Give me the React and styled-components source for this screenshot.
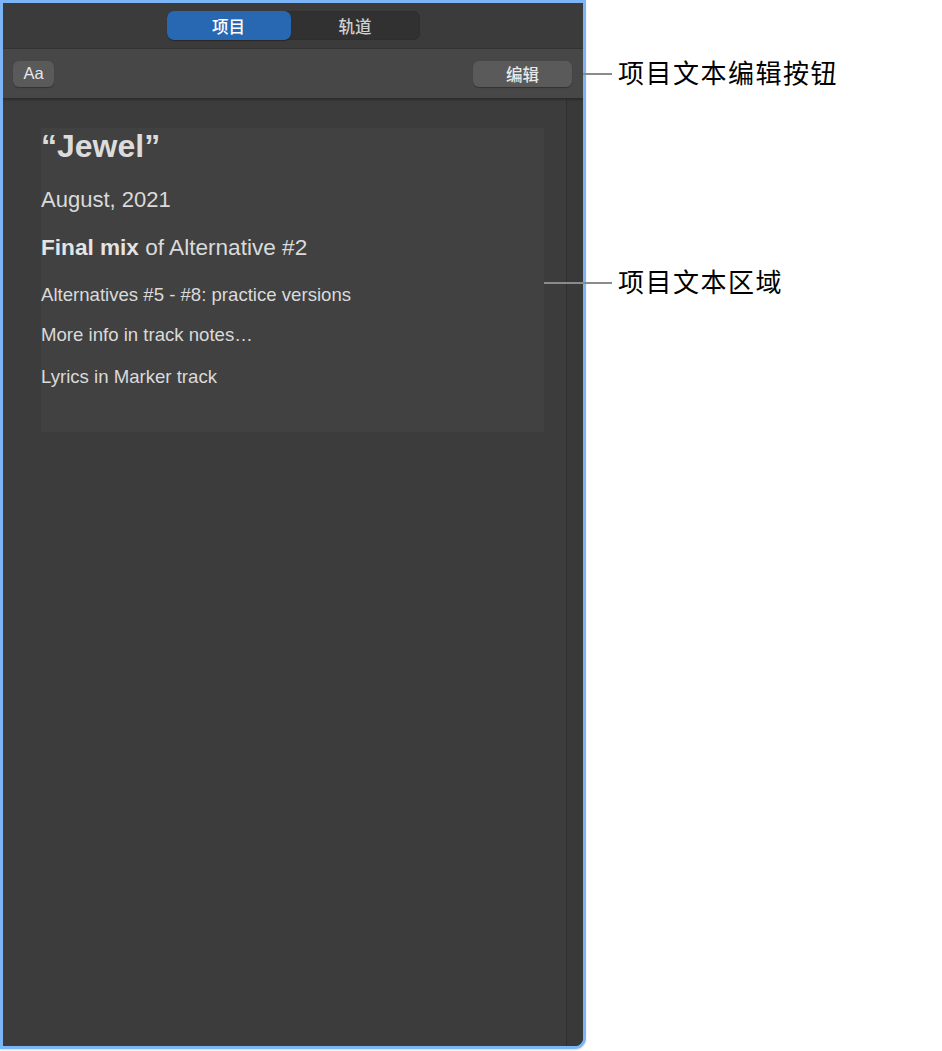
import React from 'react'
import styled, { createGlobalStyle } from 'styled-components'

const GlobalStyle = createGlobalStyle`
  html, body {
    margin: 0;
    padding: 0;
    background: #ffffff;
  }
  body {
    font-family: "Liberation Sans", "Noto Sans CJK SC", Arial, sans-serif;
  }
`

const notes = [
  { size: 22, gap: 23, lh: 26, parts: [{ text: 'August, 2021' }] },
  {
    size: 22.6,
    gap: 22,
    lh: 26,
    parts: [{ text: 'Final mix', bold: true }, { text: ' of Alternative #2' }],
  },
  { size: 18.6, gap: 23, lh: 22, parts: [{ text: 'Alternatives #5 - #8: practice versions' }] },
  { size: 18.6, gap: 18, lh: 22, parts: [{ text: 'More info in track notes…' }] },
  { size: 18.6, gap: 20, lh: 22, parts: [{ text: 'Lyrics in Marker track' }] },
]

const callouts = [
  { top: 62, left: 572, line: 40, label: '项目文本编辑按钮' },
  { top: 271, left: 544, line: 68, label: '项目文本区域' },
]

export default function App() {
  return (
    <Page>
      <GlobalStyle />
      <Panel>
        <Header>
          <Segmented>
            <Segment active>项目</Segment>
            <Segment>轨道</Segment>
          </Segmented>
        </Header>
        <Toolbar>
          <ToolButton width={41}>Aa</ToolButton>
          <ToolButton width={99}>编辑</ToolButton>
        </Toolbar>
        <Body>
          <Main>
            <NotesBox>
              <Title>“Jewel”</Title>
              {notes.map((line, i) => (
                <NoteLine key={i} size={line.size} gap={line.gap} lh={line.lh}>
                  {line.parts.map((p, j) =>
                    p.bold ? <b key={j}>{p.text}</b> : <span key={j}>{p.text}</span>
                  )}
                </NoteLine>
              ))}
            </NotesBox>
          </Main>
          <ScrollStrip />
        </Body>
      </Panel>
      {callouts.map((c, i) => (
        <Callout key={i} style={{ top: c.top, left: c.left }}>
          <Leader width={c.line} />
          <Label>{c.label}</Label>
        </Callout>
      ))}
    </Page>
  )
}

const Page = styled.div`
  position: relative;
  width: 942px;
  height: 1051px;
  background: #ffffff;
  overflow: hidden;
`

const Panel = styled.div`
  box-sizing: border-box;
  width: 586px;
  height: 1049px;
  border: 3px solid #7cb5f6;
  border-bottom-right-radius: 11px;
  background: #3c3c3c;
  display: flex;
  flex-direction: column;
  overflow: hidden;
  box-shadow: 0 1px 2px rgba(0, 0, 0, 0.15);
`

const Header = styled.div`
  height: 46px;
  flex: none;
  background: #3b3b3b;
  border-bottom: 1px solid #343434;
  display: flex;
  justify-content: center;
  align-items: flex-start;
  padding-top: 8px;
  box-sizing: border-box;
`

const Segmented = styled.div`
  width: 253px;
  height: 29px;
  border-radius: 7px;
  background: #313131;
  display: flex;
  box-shadow: inset 0 0 0 1px #2e2e2e;
`

const Segment = styled.div`
  flex: ${({ active }) => (active ? '0 0 124px' : '1')};
  display: flex;
  align-items: center;
  justify-content: center;
  border-radius: 7px;
  font-family: "Noto Sans CJK SC", sans-serif;
  font-size: 16.5px;
  font-weight: 500;
  color: ${({ active }) => (active ? '#ffffff' : '#cfcfcf')};
  background: ${({ active }) => (active ? '#2868b3' : 'transparent')};
  box-shadow: ${({ active }) => (active ? '0 1px 1px rgba(0,0,0,0.35)' : 'none')};
`

const Toolbar = styled.div`
  height: 50px;
  flex: none;
  background: #474747;
  display: flex;
  align-items: center;
  justify-content: space-between;
  padding: 0 11px 0 10px;
  box-sizing: border-box;
  border-bottom: 1px solid #2c2c2c;
  box-shadow: 0 1px 2px rgba(0, 0, 0, 0.25);
  position: relative;
  z-index: 1;
`

const ToolButton = styled.div`
  width: ${({ width }) => width}px;
  height: 26px;
  border-radius: 6px;
  background: #5a5a5a;
  box-shadow: 0 1px 1px rgba(0, 0, 0, 0.3);
  display: flex;
  align-items: center;
  justify-content: center;
  font-family: "Liberation Sans", "Noto Sans CJK SC", sans-serif;
  font-size: 16.5px;
  font-weight: 500;
  color: #e8e8e8;
`

const Body = styled.div`
  flex: 1;
  display: flex;
  min-height: 0;
`

const Main = styled.div`
  flex: 1;
  padding: 29px 22px 0 38px;
  background: #3c3c3c;
`

const NotesBox = styled.div`
  height: 304px;
  background: #414141;
  color: #dadada;
  box-sizing: border-box;
`

const Title = styled.div`
  font-size: 32px;
  font-weight: 700;
  line-height: 36px;
  color: #dcdcdc;
`

const NoteLine = styled.div`
  font-size: ${({ size }) => size}px;
  line-height: ${({ lh }) => lh}px;
  margin-top: ${({ gap }) => gap}px;
  white-space: nowrap;
  b {
    font-weight: 700;
    color: #e4e4e4;
  }
`

const ScrollStrip = styled.div`
  width: 16px;
  flex: none;
  background: #393939;
  border-left: 1px solid #2f2f2f;
`

const Callout = styled.div`
  position: absolute;
  display: flex;
  align-items: center;
  height: 24px;
`

const Leader = styled.div`
  width: ${({ width }) => width}px;
  height: 2px;
  background: #8b8b8b;
  margin-right: 6px;
`

const Label = styled.span`
  font-family: "Noto Sans CJK SC", sans-serif;
  font-size: 26px;
  letter-spacing: 1.5px;
  color: #000000;
  line-height: 24px;
  margin-bottom: 5px;
`
